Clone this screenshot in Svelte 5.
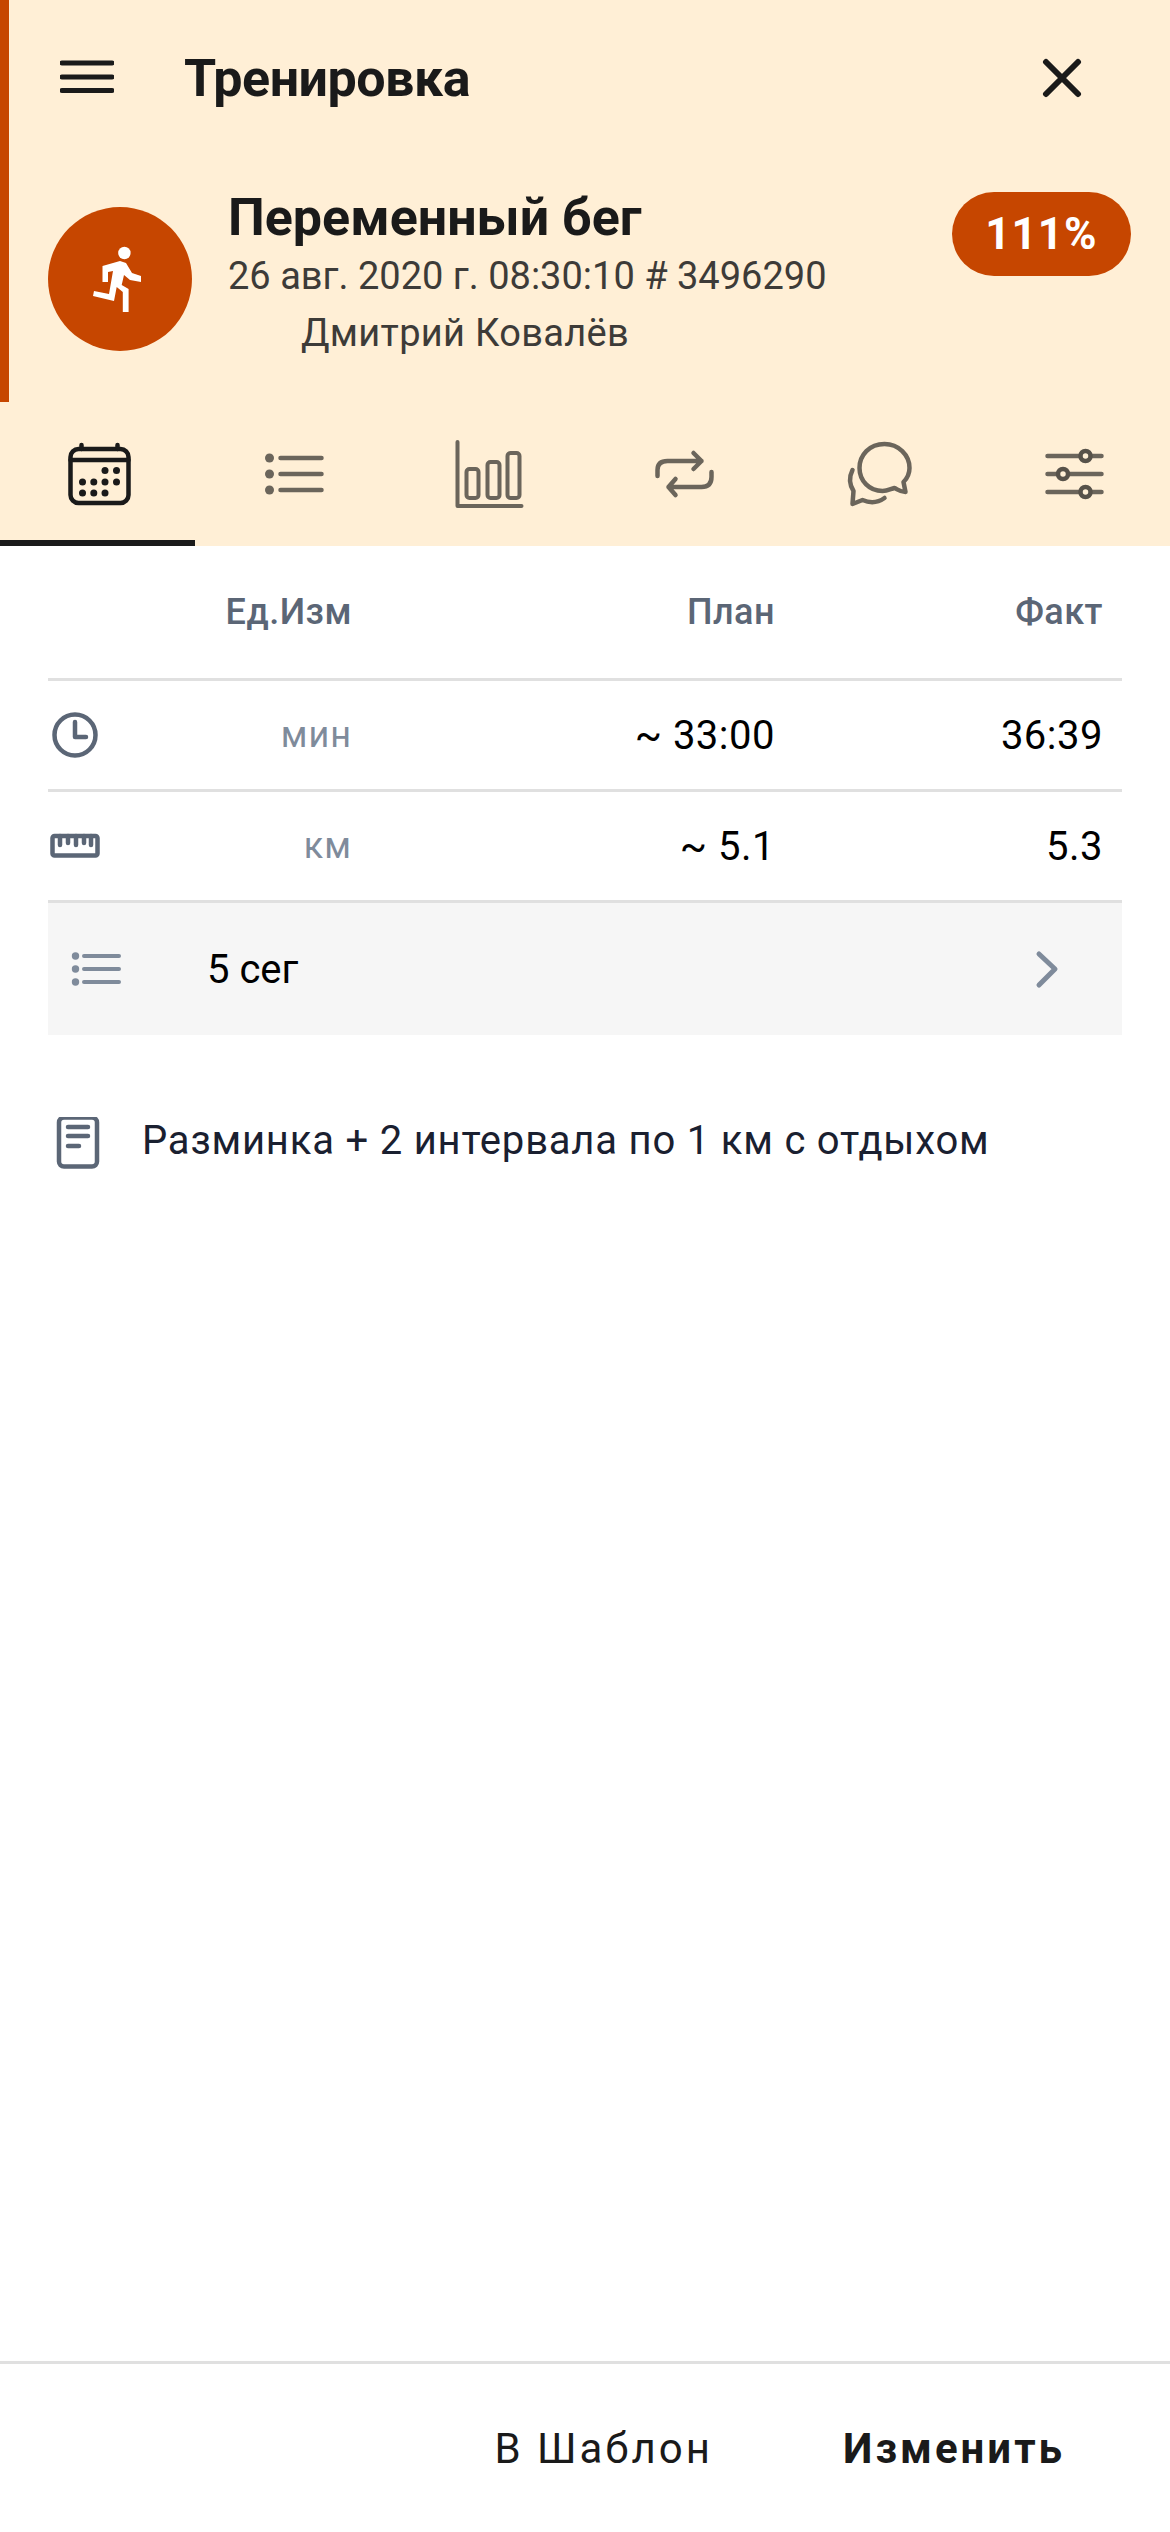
<script>
	const rows = [
		{ icon: 'clock', unit: 'мин', plan: '~ 33:00', fact: '36:39' },
		{ icon: 'ruler', unit: 'км', plan: '~ 5.1', fact: '5.3' }
	];
</script>

<div class="page">
	<header class="hero">
		<div class="topbar">
			<svg class="menu" viewBox="60 60 54 36" width="54" height="36">
				<path d="M62 63H112M62 77H112M62 90.500H112" />
			</svg>
			<h1>Тренировка</h1>
			<svg class="close" viewBox="1042 58 40 40" width="40" height="40">
				<path d="M1046 62L1078 94M1078 62L1046 94" />
			</svg>
		</div>
		<div class="summary">
			<div class="avatar">
				<svg viewBox="48 207 144 144" width="144" height="144">
					<circle cx="124.400" cy="253" r="6.200" />
					<polygon points="102.500,266 120,261 126,263 132,273 141,276 141,282 130,280 124,275 121.700,285 128.600,289 128.600,312 122.800,312 122.800,292 116.700,287 114,301 93,296 94,291 109,294 113,271 108,272 108,282 102.500,282" />
				</svg>
			</div>
			<div class="info">
				<div class="name">Переменный бег</div>
				<div class="date">26 авг. 2020 г. 08:30:10 # 3496290</div>
				<div class="athlete">Дмитрий Ковалёв</div>
			</div>
			<div class="badge">111%</div>
		</div>
	</header>

	<nav class="tabs">
		<div class="tab active">
			<svg viewBox="57.500 431 80 80" width="80" height="80">
				<g class="line">
					<rect x="70" y="449" width="58" height="54" rx="8" />
					<path d="M70 460H128M81 445V449M117 445V449" />
				</g>
				<g class="dots">
					<circle cx="104.500" cy="470.500" r="3.500" /><circle cx="116" cy="470.500" r="3.500" />
					<circle cx="82" cy="482" r="3.500" /><circle cx="93.300" cy="482" r="3.500" /><circle cx="104.500" cy="482" r="3.500" /><circle cx="116" cy="482" r="3.500" />
					<circle cx="82" cy="493" r="3.500" /><circle cx="93.300" cy="493" r="3.500" /><circle cx="104.500" cy="493" r="3.500" />
				</g>
			</svg>
		</div>
		<div class="tab">
			<svg viewBox="252.500 431 80 80" width="80" height="80">
				<g class="dots">
					<circle cx="269" cy="458" r="4.500" /><circle cx="269" cy="474" r="4.500" /><circle cx="269" cy="490" r="4.500" />
				</g>
				<path class="line" d="M280 458H321M280 474H321M280 490H321" />
			</svg>
		</div>
		<div class="tab">
			<svg viewBox="447.500 431 80 80" width="80" height="80">
				<g class="line thin">
					<path d="M457 442V506H521" />
					<rect x="466" y="469" width="12" height="29" rx="3" />
					<rect x="487" y="462" width="12" height="36" rx="3" />
					<rect x="507" y="453" width="12" height="45" rx="3" />
				</g>
			</svg>
		</div>
		<div class="tab">
			<svg viewBox="642.500 431 80 80" width="80" height="80">
				<path class="line" d="M657 476V470Q657 461 667 461H701M693 453L701 461L693 469M711 472V477Q711 487 701 487H668M675 479L668 487L675 495" />
			</svg>
		</div>
		<div class="tab">
			<svg viewBox="837.500 431 80 80" width="80" height="80">
				<path class="line" d="M894 488C890 489 887 491 882 491C869 491 859 481 859 468C859 455 869 444 884 444C898 444 909 455 909 468C909 473 907 478 903 482L905 492C900 492 898 490 894 488ZM852 470C849 476 848 483 853 491L852 504L862 500C869 503 877 503 884 498" />
			</svg>
		</div>
		<div class="tab">
			<svg viewBox="1032.500 431 80 80" width="80" height="80">
				<path class="line" d="M1047 456H1101M1047 474H1101M1047 492H1101" />
				<g class="knobs">
					<circle cx="1085" cy="456" r="5" /><circle cx="1062.500" cy="474" r="5" /><circle cx="1085" cy="492" r="5" />
				</g>
			</svg>
		</div>
	</nav>

	<main>
		<div class="row head">
			<span class="unit">Ед.Изм</span>
			<span class="num">План</span>
			<span class="num">Факт</span>
		</div>
		{#each rows as row}
			<div class="row">
				{#if row.icon === 'clock'}
					<svg class="row-icon" viewBox="48 710 54 50" width="54" height="50">
						<circle cx="75" cy="735" r="20.500" />
						<path d="M75 722V737H86" />
					</svg>
				{:else}
					<svg class="row-icon" viewBox="48 821 54 50" width="54" height="50">
						<rect x="52.500" y="836" width="45" height="19.500" rx="2" />
						<path d="M60 836V845M68 836V843M76 836V845M84 836V843M91 836V845" />
					</svg>
				{/if}
				<span class="unit">{row.unit}</span>
				<span class="num value">{row.plan}</span>
				<span class="num value">{row.fact}</span>
			</div>
		{/each}
		<div class="segments">
			<svg viewBox="68 944 56 50" width="56" height="50">
				<circle cx="75.500" cy="956" r="3.700" /><circle cx="75.500" cy="969" r="3.700" /><circle cx="75.500" cy="982" r="3.700" />
				<path d="M84 956H119M84 969H119M84 982H119" />
			</svg>
			<span class="seg-label">5 сег</span>
			<svg class="chevron" viewBox="1030 948 32 42" width="32" height="42">
				<path d="M1039 954L1055 969L1039 985" />
			</svg>
		</div>
		<div class="note">
			<svg viewBox="52 1118 50 54" width="50" height="54">
				<rect x="59" y="1118.500" width="38" height="49" rx="5" />
				<path d="M68 1128H88M68 1137H88M68 1147H79" />
			</svg>
			<p>Разминка + 2 интервала по 1 км с отдыхом</p>
		</div>
	</main>

	<footer>
		<button>В Шаблон</button>
		<button class="primary">Изменить</button>
	</footer>
</div>

<style>
	:global(body) {
		margin: 0;
		background: #fff;
	}

	.page {
		display: flex;
		flex-direction: column;
		height: 2532px;
		font-family: Roboto, sans-serif;
		color: #1a1a1a;
	}

	svg {
		display: block;
		flex: none;
		fill: none;
	}

	.hero {
		height: 402px;
		box-sizing: border-box;
		background: #ffefd6;
		border-left: 9px solid #c64600;
	}

	.topbar {
		display: flex;
		align-items: center;
		height: 156px;
		padding-left: 51px;
		padding-right: 88px;
	}

	.menu path,
	.close path {
		stroke: #1a1a1a;
		stroke-width: 5;
		stroke-linecap: round;
	}

	.close path {
		stroke-width: 6;
	}

	h1 {
		flex: 1;
		margin: 0 0 0 70px;
		font-size: 52px;
		font-weight: 700;
		letter-spacing: -0.5px;
	}

	.summary {
		display: flex;
		align-items: flex-start;
		padding: 36px 39px 0;
		margin-top: -5px;
	}

	.avatar {
		width: 144px;
		height: 144px;
		margin-top: 20px;
		border-radius: 50%;
		background: #c64600;
		flex: none;
	}

	.avatar svg {
		fill: #fff;
	}

	.info {
		flex: 1;
		margin-left: 36px;
		color: #3d3b38;
	}

	.name {
		font-size: 52px;
		font-weight: 700;
		line-height: 62px;
		color: #1a1a1a;
	}

	.date,
	.athlete {
		font-size: 38px;
		line-height: 55px;
	}

	.athlete {
		margin-left: 73px;
		margin-top: 2px;
		letter-spacing: 0.3px;
	}

	.badge {
		width: 179px;
		height: 84px;
		margin-top: 5px;
		border-radius: 42px;
		background: #c64600;
		color: #fff;
		font-size: 44px;
		font-weight: 700;
		line-height: 84px;
		text-align: center;
		letter-spacing: 1px;
	}

	.tabs {
		display: flex;
		height: 144px;
		background: #ffefd6;
	}

	.tab {
		display: flex;
		flex: 1;
		align-items: center;
		justify-content: center;
		box-sizing: border-box;
		border-bottom: 6px solid transparent;
	}

	.tab.active {
		border-bottom-color: #1a1a1a;
	}

	.line {
		fill: none;
		stroke: #6b655b;
		stroke-width: 4.500;
		stroke-linecap: round;
		stroke-linejoin: round;
	}

	.line.thin {
		stroke-width: 4;
	}

	.dots {
		fill: #6b655b;
	}

	.knobs circle {
		fill: #ffefd6;
		stroke: #57524a;
		stroke-width: 4.500;
	}

	.active .line {
		stroke: #1a1a1a;
	}

	.active .dots {
		fill: #1a1a1a;
	}

	main {
		flex: 1;
		padding: 0 48px;
	}

	.row {
		display: grid;
		grid-template-columns: 304px 423px 328px;
		align-items: center;
		height: 108px;
		border-bottom: 3px solid #e0e0e0;
		position: relative;
	}

	.row.head {
		height: 132px;
	}

	.row-icon {
		position: absolute;
		left: 0;
		top: 29px;
		stroke: #5b6676;
		stroke-width: 4.500;
		stroke-linecap: round;
		stroke-linejoin: round;
	}

	.row .unit,
	.row .num {
		text-align: right;
		font-size: 36px;
		font-weight: 500;
		color: #5b6676;
		letter-spacing: 0.5px;
	}

	.row .unit {
		grid-column: 1;
	}

	.row:not(.head) .unit {
		font-weight: 400;
		color: #7f8b9b;
		letter-spacing: 1px;
	}

	.row .value {
		font-size: 40px;
		font-weight: 400;
		color: #000;
	}

	.segments {
		display: flex;
		align-items: center;
		height: 132px;
		background: #f6f6f6;
		padding-left: 20px;
		padding-right: 60px;
	}

	.segments svg {
		stroke: #7f8b9b;
		fill: none;
	}

	.segments circle {
		fill: #7f8b9b;
		stroke: none;
	}

	.segments path {
		stroke-width: 4;
		stroke-linecap: round;
		stroke-linejoin: round;
	}

	.seg-label {
		flex: 1;
		margin-left: 83px;
		font-size: 40px;
		color: #000;
	}

	.chevron path {
		stroke-width: 5;
	}

	.note {
		display: flex;
		align-items: flex-start;
		margin-top: 82px;
		padding-left: 4px;
	}

	.note svg {
		stroke: #5b6676;
		stroke-width: 4.500;
		stroke-linecap: round;
	}

	.note p {
		margin: 0 0 0 40px;
		font-size: 40px;
		line-height: 47px;
		color: #1a2030;
		letter-spacing: 0.8px;
	}

	footer {
		display: flex;
		justify-content: flex-end;
		align-items: center;
		gap: 130px;
		height: 168px;
		border-top: 3px solid #e0e0e0;
		padding-right: 105px;
	}

	button {
		padding: 0;
		border: none;
		background: none;
		font-family: Roboto, sans-serif;
		font-size: 42px;
		color: #1a1a1a;
		letter-spacing: 3px;
	}

	button.primary {
		font-weight: 700;
	}
</style>
